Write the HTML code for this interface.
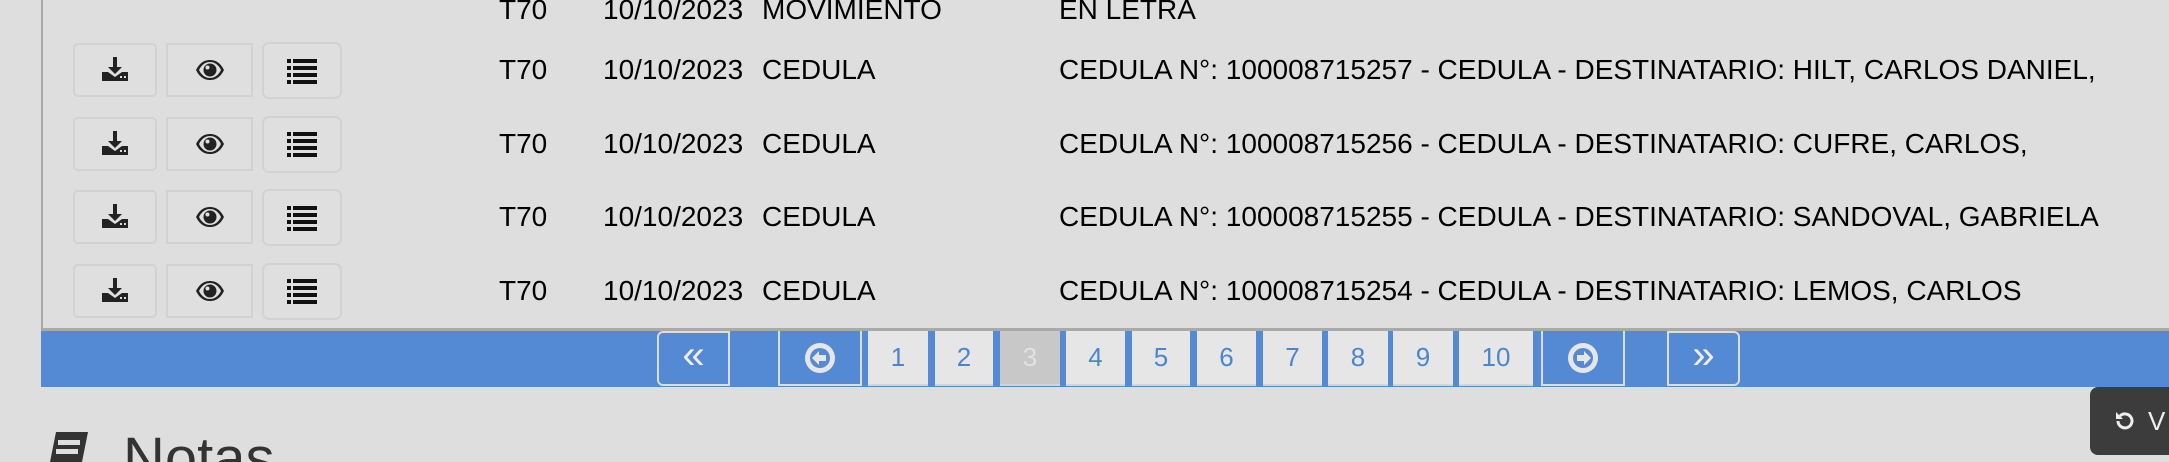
<!DOCTYPE html>
<html style="overflow:hidden;height:462px"><head><style>
body{margin:0;width:2169px;height:462px;background:#dedede;overflow:hidden;position:relative;font-family:"Liberation Sans",Arial,sans-serif;}
.abs{position:absolute}
.vline{left:41px;top:0;width:2px;height:331px;background:#a9a9a9}
.hline{left:41px;top:328px;width:2128px;height:3px;background:#a9a9a9}
.bar{left:41px;top:331px;width:2128px;height:56px;background:#5489d4}
.btn{position:absolute;border:2px solid #d2d2d2;box-sizing:border-box;background:#dfdfdf;display:flex;align-items:center;justify-content:center}
.t{position:absolute;font-size:28px;color:#000;white-space:nowrap;line-height:1}
.pg{position:absolute;top:331px;height:55px;background:#e6e6e6;color:#4a86d0;font-size:26px;display:flex;align-items:center;justify-content:center;box-sizing:border-box;border-bottom:2px solid #d4d4d4}
.nb{position:absolute;top:331px;height:55px;box-sizing:border-box;border:2px solid #dcdcdc;border-top:none;background:#5489d4;display:flex;align-items:center;justify-content:center}
</style></head><body>
<div class="abs vline"></div>
<div class="abs hline"></div>
<div class="abs bar"></div>

<div class="t" style="left:499px;top:-4px">T70</div>
<div class="t" style="left:603px;top:-4px">10/10/2023</div>
<div class="t" style="left:762px;top:-4px">MOVIMIENTO</div>
<div class="t" style="left:1059px;top:-4px">EN LETRA</div>

<div id="rows"></div>
<script>
var descs=["CEDULA N°: 100008715257 - CEDULA - DESTINATARIO: HILT, CARLOS DANIEL,","CEDULA N°: 100008715256 - CEDULA - DESTINATARIO: CUFRE, CARLOS,","CEDULA N°: 100008715255 - CEDULA - DESTINATARIO: SANDOVAL, GABRIELA","CEDULA N°: 100008715254 - CEDULA - DESTINATARIO: LEMOS, CARLOS"];
var dl='<svg width="26" height="26" viewBox="0 0 26 26"><path d="M11 0h4v10h5l-7 7-7-7h5z" fill="#222"/><path d="M0 15h6l7 5 7-5h6v9H0z" fill="#222"/><rect x="18" y="19" width="2" height="2" fill="#ddd"/><rect x="22" y="19" width="2" height="2" fill="#ddd"/></svg>';
var eye='<svg width="30" height="22" viewBox="0 0 30 22"><path d="M1 11C5 3 10 1 15 1s10 2 14 10c-4 8-9 10-14 10S5 19 1 11z" fill="#222"/><path d="M4 11c3-6 7-8 11-8s8 2 11 8c-3 6-7 8-11 8S7 17 4 11z" fill="#dfdfdf"/><circle cx="15" cy="11" r="6.5" fill="#222"/><circle cx="12.5" cy="8.5" r="2" fill="#dfdfdf"/></svg>';
var ls='<svg width="30" height="26" viewBox="0 0 30 26"><g fill="#111"><rect x="0" y="1" width="4" height="4"/><rect x="6" y="1" width="24" height="4"/><rect x="0" y="8" width="4" height="4"/><rect x="6" y="8" width="24" height="4"/><rect x="0" y="15" width="4" height="4"/><rect x="6" y="15" width="24" height="4"/><rect x="0" y="22" width="4" height="4"/><rect x="6" y="22" width="24" height="4"/></g></svg>';
var h='';
for(var i=0;i<4;i++){var y=42+i*73.5;
h+='<div class="btn" style="left:73px;top:'+(y+1)+'px;width:84px;height:54px;border-radius:5px">'+dl+'</div>';
h+='<div class="btn" style="left:166px;top:'+(y+1)+'px;width:87px;height:54px">'+eye+'</div>';
h+='<div class="btn" style="left:262px;top:'+y+'px;width:80px;height:57px;border-radius:7px">'+ls+'</div>';
var ty=y+14;
h+='<div class="t" style="left:499px;top:'+ty+'px">T70</div><div class="t" style="left:603px;top:'+ty+'px">10/10/2023</div><div class="t" style="left:762px;top:'+ty+'px">CEDULA</div><div class="t" style="left:1059px;top:'+ty+'px">'+descs[i]+'</div>';}
document.getElementById('rows').innerHTML=h;
</script>

<div class="nb" style="left:657px;width:73px;border-radius:6px 0 0 6px;border-top:2px solid #dcdcdc"><span style="color:#eee;font-size:40px;margin-top:-6px">«</span></div>
<div class="nb" style="left:778px;width:84px"><svg width="34" height="34" viewBox="0 0 34 34"><circle cx="17" cy="17" r="15" fill="#e6e6e6"/><circle cx="17" cy="17" r="10" fill="#5489d4"/><path d="M9 17l7-7v4h7v6h-7v4z" fill="#e6e6e6"/></svg></div>
<div class="pg" style="left:868px;width:60px">1</div>
<div class="pg" style="left:935px;width:58px">2</div>
<div class="pg" style="left:1000px;width:60px;background:#c8c8c8;color:#e2e2e2">3</div>
<div class="pg" style="left:1066px;width:59px">4</div>
<div class="pg" style="left:1132px;width:58px">5</div>
<div class="pg" style="left:1197px;width:59px">6</div>
<div class="pg" style="left:1263px;width:59px">7</div>
<div class="pg" style="left:1328px;width:60px">8</div>
<div class="pg" style="left:1393px;width:60px">9</div>
<div class="pg" style="left:1459px;width:74px">10</div>
<div class="nb" style="left:1541px;width:84px"><svg width="34" height="34" viewBox="0 0 34 34"><circle cx="17" cy="17" r="15" fill="#e6e6e6"/><circle cx="17" cy="17" r="10" fill="#5489d4"/><path d="M25 17l-7-7v4h-7v6h7v4z" fill="#e6e6e6"/></svg></div>
<div class="nb" style="left:1667px;width:73px;border-radius:0 6px 6px 0;border-top:2px solid #dcdcdc"><span style="color:#eee;font-size:40px;margin-top:-6px">»</span></div>

<div class="abs" style="left:2090px;top:387px;width:79px;height:68px;background:#3c3c3c;border-radius:8px 0 0 8px;color:#eee;font-size:26px;display:flex;align-items:center;padding-left:24px;box-sizing:border-box;overflow:hidden;white-space:nowrap">
<svg width="22" height="22" viewBox="0 0 22 22" style="margin-right:12px;flex:none"><path d="M4 11a7 7 0 1 0 2-5" fill="none" stroke="#eee" stroke-width="3"/><path d="M2 2v7h7z" fill="#eee"/></svg>V</div>

<div class="abs" style="left:0;top:420px;width:400px;height:42px;overflow:hidden">
<svg class="abs" style="left:46px;top:12px" width="48" height="30" viewBox="0 0 48 30"><path d="M10 0h32l-6 30H4z" fill="#333"/><rect x="12" y="8" width="22" height="5" fill="#dedede"/><rect x="10" y="17" width="22" height="5" fill="#dedede"/></svg>
<div class="abs" style="left:123px;top:10px;font-size:58px;color:#333;line-height:1;height:32px;overflow:hidden">Notas</div>
</div>
</body></html>
